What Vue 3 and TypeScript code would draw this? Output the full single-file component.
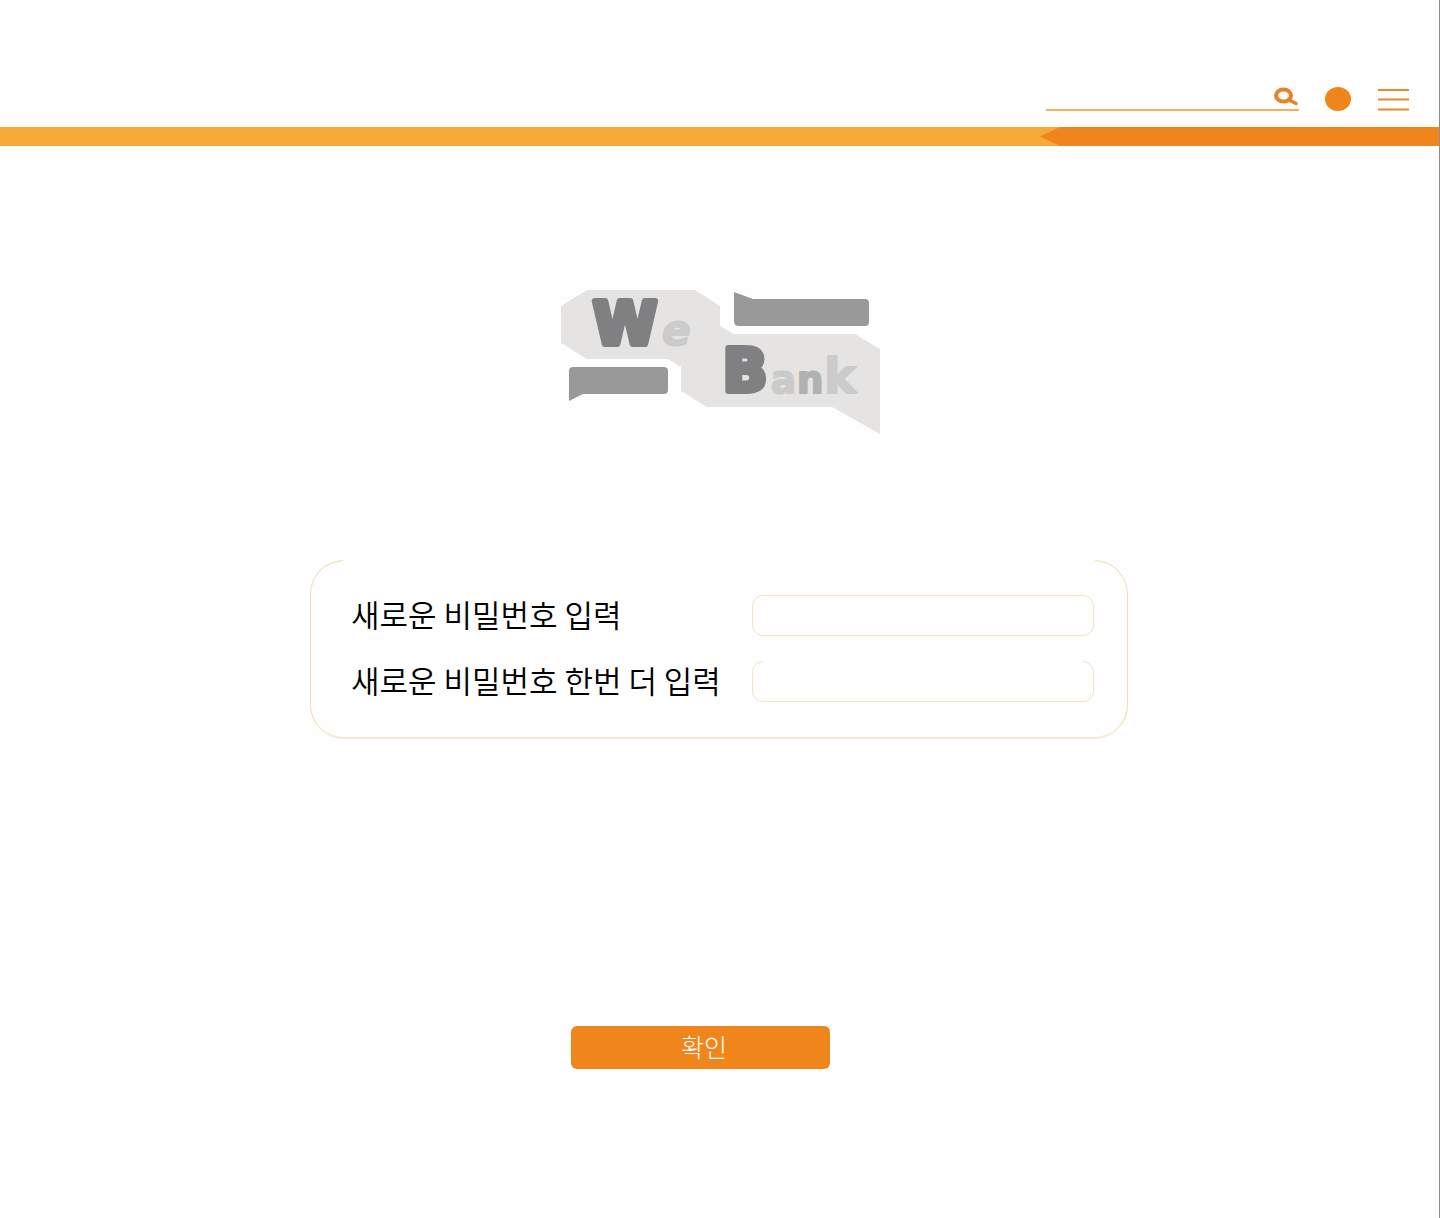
<script setup lang="ts">
import { ref } from 'vue'

interface Field {
  id: string
  label: string
  openTop: boolean
}

const fields: Field[] = [
  { id: 'new-password', label: '새로운 비밀번호 입력', openTop: false },
  { id: 'confirm-password', label: '새로운 비밀번호 한번 더 입력', openTop: true },
]

const values = ref<string[]>(['', ''])
const query = ref('')
</script>

<template>
  <div class="page">
    <header class="header">
      <form class="search" role="search" @submit.prevent>
        <input v-model="query" class="search-input" type="search" aria-label="검색" />
        <button class="plain" type="submit" aria-label="검색">
          <svg width="26" height="22" viewBox="0 0 26 22">
            <ellipse cx="10.500" cy="10.500" rx="7.500" ry="6" fill="none" stroke="#e8832a" stroke-width="4" />
            <path d="M16 15L23 18.500" stroke="#e8832a" stroke-width="3.600" stroke-linecap="round" />
          </svg>
        </button>
      </form>
      <button class="plain profile" type="button" aria-label="내 정보">
        <svg width="26" height="24" viewBox="0 0 26 24">
          <ellipse cx="13" cy="12" rx="13" ry="12" fill="#f0861b" />
        </svg>
      </button>
      <button class="plain menu" type="button" aria-label="메뉴">
        <svg width="31" height="22" viewBox="0 0 31 22">
          <path d="M0 1H31M0 10.500H31M0 20.500H31" stroke="#e98a2b" stroke-width="2" />
        </svg>
      </button>
    </header>
    <div class="stripe"><div class="stripe-end"></div></div>

    <main class="main">
      <svg class="logo" width="320" height="145" viewBox="560 289 320 145" role="img" aria-label="We Bank">
        <path fill="#e5e4e2" d="M587 290H695L720 306V326L734 334H855L880 349V434L832 407H707L681 391V367L668 359H587L561 343V306Z" />
        <path fill="#999" d="M734 292L753 299H865Q869 299 869 303V322Q869 326 865 326H739Q734 326 734 321Z" />
        <path fill="#999" d="M573 367H664Q668 367 668 371V390Q668 394 664 394H583L569 401V371Q569 367 573 367Z" />
        <g class="logo-text">
          <text class="light oblique" x="662" y="345" font-size="42">e</text>
          <text class="dark" x="593" y="344" font-size="58">W</text>
          <text class="light" x="771" y="393" font-size="37">a</text>
          <text class="light" x="824" y="393" font-size="48">k</text>
          <text class="mid" x="797" y="393" font-size="37">n</text>
          <text class="dark" x="723" y="391" font-size="58">B</text>
        </g>
      </svg>

      <form id="reset" class="card" @submit.prevent>
        <div v-for="(field, i) in fields" :key="field.id" class="row">
          <label :for="field.id">{{ field.label }}</label>
          <span class="box" :class="{ open: field.openTop }">
            <input :id="field.id" v-model="values[i]" type="password" />
          </span>
        </div>
      </form>

      <button class="confirm" type="submit" form="reset">확인</button>
    </main>
  </div>
</template>

<style>
body {
  margin: 0;
  background: #fefefe;
}
</style>

<style scoped>
.page {
  box-sizing: border-box;
  min-height: 100vh;
  border-right: 1px solid #8c8c8c;
  background: #fefefe;
  font-family: "Noto Sans CJK KR", sans-serif;
}
.header {
  box-sizing: border-box;
  height: 127px;
  padding: 0 30px 16px 0;
  display: flex;
  justify-content: flex-end;
  align-items: flex-end;
}
.plain {
  padding: 0;
  border: 0;
  background: none;
  cursor: pointer;
}
.plain svg {
  display: block;
}
.search {
  box-sizing: border-box;
  width: 253px;
  height: 26px;
  margin-right: 26px;
  display: flex;
  align-items: flex-start;
  border-bottom: 2px solid #f3b060;
}
.search-input {
  flex: 1;
  min-width: 0;
  height: 22px;
  padding: 0 4px;
  border: 0;
  outline: 0;
  background: none;
  font-size: 14px;
}
.profile {
  margin-right: 27px;
}
.stripe {
  height: 19px;
  display: flex;
  justify-content: flex-end;
  background: #f6ab38;
}
.stripe-end {
  width: 399px;
  background: #f0861b;
  clip-path: polygon(0 50%, 20px 0, 100% 0, 100% 100%, 20px 100%);
}
.main {
  display: flex;
  flex-direction: column;
  align-items: center;
  padding: 143px 25px 40px 24px;
}
.logo {
  margin-left: 1px;
}
.logo-text {
  font-family: "DejaVu Sans", sans-serif;
  font-weight: 700;
  stroke-linejoin: round;
}
.dark {
  fill: #808082;
  stroke: #808082;
  stroke-width: 6px;
}
.mid {
  fill: #b0b1b1;
  stroke: #b0b1b1;
  stroke-width: 2px;
}
.light {
  fill: #cbcbcb;
  stroke: #cbcbcb;
  stroke-width: 2px;
}
.oblique {
  font-style: oblique;
}
.card {
  position: relative;
  box-sizing: border-box;
  width: 100%;
  max-width: 818px;
  margin-top: 126px;
  padding: 34px 33px 35px 40px;
  display: flex;
  flex-direction: column;
  gap: 25px;
  border: 1px solid #f2dcb4;
  border-bottom: 2px solid #f6ead6;
  border-radius: 34px;
}
.card::before,
.open::before {
  content: "";
  position: absolute;
  top: -1px;
  left: 32px;
  right: 32px;
  height: 1px;
  background: #fefefe;
}
.row {
  display: flex;
  align-items: center;
  justify-content: space-between;
  height: 41px;
}
.row label {
  padding-bottom: 4px;
  font-size: 31px;
  font-weight: 350;
  line-height: 36px;
  color: #000;
  white-space: nowrap;
}
.box {
  position: relative;
  box-sizing: border-box;
  width: 342px;
  height: 41px;
  border: 1px solid #f5e3c4;
  border-radius: 11px;
}
.open::before {
  left: 10px;
  right: 10px;
}
.box input {
  box-sizing: border-box;
  width: 100%;
  height: 100%;
  padding: 0 12px;
  border: 0;
  outline: 0;
  background: none;
  font-size: 20px;
}
.confirm {
  width: 259px;
  height: 43px;
  margin: 287px 37px 0 0;
  padding: 0 0 4px 7px;
  border: 0;
  border-radius: 6px;
  background: #f0861b;
  color: #fff;
  font-family: inherit;
  font-size: 25px;
  font-weight: 300;
  line-height: 36px;
  cursor: pointer;
}
</style>
